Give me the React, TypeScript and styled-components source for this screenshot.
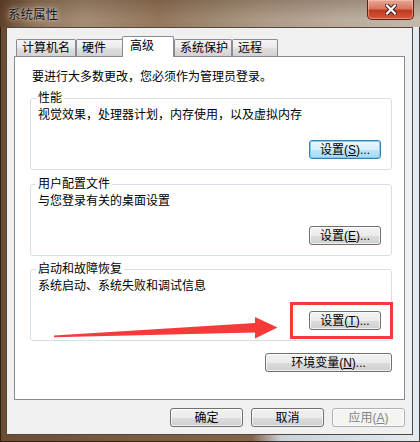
import React from 'react';
import styled, { createGlobalStyle } from 'styled-components';

const GlobalStyle = createGlobalStyle`
  * { box-sizing: border-box; }
  html, body {
    margin: 0;
    padding: 0;
    background: #7b5b3e;
  }
  body {
    width: 420px;
    height: 442px;
    overflow: hidden;
    font-family: "Liberation Sans", "Noto Sans CJK SC", sans-serif;
    font-size: 12px;
    color: #000;
  }
`;

const Window = styled.div`
  position: relative;
  width: 420px;
  height: 442px;
  display: flex;
  flex-direction: column;
  background: linear-gradient(90deg, #6c4d32 0%, #7b5b3e 30%, #836446 60%, #c8d2db 67%, #e4ebf1 100%);
  box-shadow: inset 0 0 0 1px rgba(35, 24, 14, 0.85);
`;

const TitleBar = styled.div`
  height: 27px;
  flex: none;
  display: flex;
  justify-content: space-between;
  align-items: flex-start;
  background:
    linear-gradient(180deg, rgba(60, 36, 16, 0.25) 0%, rgba(255, 255, 255, 0) 70%),
    linear-gradient(90deg, #5f4128 0%, #8f745a 8%, #a48c73 20%, #93775b 38%, #9f8870 50%, #ad9985 62%, #b9aa9a 80%, #c4b8ab 100%);
`;

const Title = styled.div`
  padding: 8px 0 0 8px;
  font-size: 12.5px;
  line-height: 15px;
  color: #111;
  text-shadow: 0 0 6px rgba(255, 255, 255, 0.85), 0 0 2px rgba(255, 255, 255, 0.6);
`;

const CloseButton = styled.div`
  width: 47px;
  height: 20px;
  margin-right: 6px;
  display: flex;
  align-items: center;
  justify-content: center;
  border: 1px solid #5b2016;
  border-top: none;
  border-radius: 0 0 5px 5px;
  background: linear-gradient(180deg, #e9a898 0%, #d8765f 45%, #c13a1f 55%, #d4583b 100%);
  box-shadow: inset 0 0 0 1px rgba(255, 210, 200, 0.45);
`;

const Body = styled.div`
  flex: 1;
  display: flex;
  padding: 0 7px 7px 6px;
`;

const Client = styled.div`
  flex: 1;
  display: flex;
  flex-direction: column;
  border: 1px solid #51483f;
  background: #f0f0f0;
  padding: 8px 7px 7px 7px;
`;

const TabStrip = styled.div`
  height: 20px;
  flex: none;
  display: flex;
  align-items: flex-end;
  padding-left: 2px;
`;

const Tab = styled.div<{ $w: number; $active?: boolean }>`
  position: relative;
  z-index: ${(p) => (p.$active ? 2 : 1)};
  width: ${(p) => p.$w}px;
  height: ${(p) => (p.$active ? 21 : 17)}px;
  margin-left: ${(p) => (p.$active ? -2 : 0)}px;
  margin-bottom: ${(p) => (p.$active ? -1 : 0)}px;
  padding-left: ${(p) => (p.$active ? 7 : 5)}px;
  border: 1px solid #898c95;
  border-bottom: none;
  border-radius: 2px 2px 0 0;
  line-height: ${(p) => (p.$active ? 18 : 16)}px;
  white-space: nowrap;
  background: ${(p) =>
    p.$active ? '#fff' : 'linear-gradient(180deg, #f5f5f5 0%, #ececec 45%, #dedede 55%, #d2d2d2 100%)'};
`;

const Panel = styled.div`
  height: 344px;
  flex: none;
  display: flex;
  flex-direction: column;
  border: 1px solid #898c95;
  background: #fff;
  padding: 13px 12px 0 15px;
`;

const Intro = styled.div`
  line-height: 14px;
  padding-left: 2px;
`;

const Group = styled.fieldset<{ $mt: number }>`
  margin: ${(p) => p.$mt}px 0 0 0;
  padding: 3px 10px 10px 7px;
  min-width: 0;
  border: 1px solid #d5dfe5;
  border-radius: 3px;
`;

const Legend = styled.legend`
  margin-left: -2px;
  padding: 0 2px;
  line-height: 14px;
  font-size: 12px;
`;

const Desc = styled.div`
  line-height: 14px;
`;

const ButtonRow = styled.div<{ $mt: number }>`
  display: flex;
  justify-content: flex-end;
  margin-top: ${(p) => p.$mt}px;
`;

const Footer = styled.div`
  display: flex;
  justify-content: flex-end;
  gap: 8px;
  margin-top: 8px;
`;

type Kind = 'normal' | 'focus' | 'disabled';

const Btn = styled.button<{ $w: number; $kind?: Kind }>`
  width: ${(p) => p.$w}px;
  height: 19px;
  padding: 0;
  display: inline-flex;
  align-items: center;
  justify-content: center;
  font-family: inherit;
  font-size: 12px;
  line-height: 14px;
  border-radius: 3px;
  border: 1px solid ${(p) => (p.$kind === 'focus' ? '#3c7fb1' : p.$kind === 'disabled' ? '#adb2b5' : '#707070')};
  color: ${(p) => (p.$kind === 'disabled' ? '#838383' : '#000')};
  background: ${(p) =>
    p.$kind === 'focus'
      ? 'linear-gradient(180deg, #eaf6fd 0%, #d9f0fc 50%, #bee6fd 50%, #a7d9f5 100%)'
      : p.$kind === 'disabled'
      ? '#f4f4f4'
      : 'linear-gradient(180deg, #f2f2f2 0%, #ebebeb 50%, #dddddd 50%, #cfcfcf 100%)'};
  box-shadow: inset 0 0 0 1px ${(p) => (p.$kind === 'focus' ? 'rgba(120, 200, 240, 0.9)' : 'rgba(255, 255, 255, 0.7)')};
  u { text-decoration-thickness: 1px; text-underline-offset: 1px; }
`;

const Annotation = styled.svg`
  position: absolute;
  left: 0;
  top: 0;
  pointer-events: none;
`;

function CloseGlyph() {
  return (
    <svg width="12" height="11" viewBox="0 0 12 11">
      <path d="M2 1.5 L10 9.5 M10 1.5 L2 9.5" stroke="#3a1a14" strokeWidth="4" strokeLinecap="square" />
      <path d="M2 1.5 L10 9.5 M10 1.5 L2 9.5" stroke="#fff" strokeWidth="2.2" strokeLinecap="square" />
    </svg>
  );
}

export default function App() {
  return (
    <>
      <GlobalStyle />
      <Window>
        <TitleBar>
          <Title>系统属性</Title>
          <CloseButton>
            <CloseGlyph />
          </CloseButton>
        </TitleBar>
        <Body>
          <Client>
            <TabStrip>
              <Tab $w={60}>计算机名</Tab>
              <Tab $w={48}>硬件</Tab>
              <Tab $w={52} $active>
                高级
              </Tab>
              <Tab $w={58}>系统保护</Tab>
              <Tab $w={46}>远程</Tab>
            </TabStrip>
            <Panel>
              <Intro>要进行大多数更改，您必须作为管理员登录。</Intro>

              <Group $mt={7}>
                <Legend>性能</Legend>
                <Desc>视觉效果，处理器计划，内存使用，以及虚拟内存</Desc>
                <ButtonRow $mt={18}>
                  <Btn $w={72} $kind="focus">
                    设置(<u>S</u>)...
                  </Btn>
                </ButtonRow>
              </Group>

              <Group $mt={7}>
                <Legend>用户配置文件</Legend>
                <Desc>与您登录有关的桌面设置</Desc>
                <ButtonRow $mt={18}>
                  <Btn $w={72}>
                    设置(<u>E</u>)...
                  </Btn>
                </ButtonRow>
              </Group>

              <Group $mt={6}>
                <Legend>启动和故障恢复</Legend>
                <Desc>系统启动、系统失败和调试信息</Desc>
                <ButtonRow $mt={18}>
                  <Btn $w={72}>
                    设置(<u>T</u>)...
                  </Btn>
                </ButtonRow>
              </Group>

              <ButtonRow $mt={12}>
                <Btn $w={127}>
                  环境变量(<u>N</u>)...
                </Btn>
              </ButtonRow>
            </Panel>
            <Footer>
              <Btn $w={73}>确定</Btn>
              <Btn $w={73}>取消</Btn>
              <Btn $w={73} $kind="disabled">
                应用(<u>A</u>)
              </Btn>
            </Footer>
          </Client>
        </Body>

        {/* red annotation drawn over the dialog */}
        <Annotation width="420" height="442" viewBox="0 0 420 442">
          <rect x="291.5" y="303.5" width="100" height="34" fill="none" stroke="#f53a3a" strokeWidth="3" />
          <polygon
            points="54,335.6 255,323 255,317 277.5,327.5 255,338.5 255,332.5 54,337.2"
            fill="#f53a3a"
          />
        </Annotation>
      </Window>
    </>
  );
}
